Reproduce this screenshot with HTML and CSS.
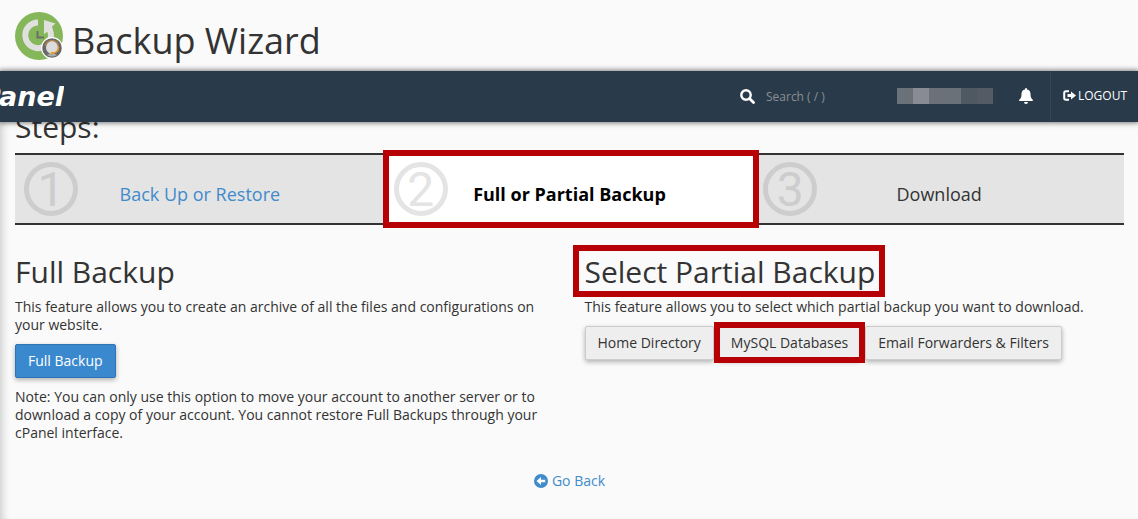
FILE: index.html
```html
<!DOCTYPE html>
<html lang="en">
<head>
<meta charset="utf-8">
<meta name="viewport" content="width=device-width, initial-scale=1">
<title>Backup Wizard</title>
<link rel="stylesheet" href="styles.css">
</head>
<body>
<header class="page-header">
  <svg class="page-icon" viewBox="0 0 50 50" aria-hidden="true">
    <circle cx="24" cy="24" r="24" fill="#85b659"/>
    <path d="M23 10.500A12.800 12.800 0 1 0 34.500 17.500" fill="none" stroke="#e0e1de" stroke-width="6"/>
    <path d="M29 8L40.500 11.500L37 14.500L38 18L32 20L29 22Z" fill="#e0e1de"/>
    <path d="M22.500 19v6.500H29" fill="none" stroke="#69706b" stroke-width="2"/>
    <circle cx="37" cy="36" r="11" fill="#fff"/>
    <circle cx="37" cy="36" r="9.800" fill="#6d6868"/>
    <ellipse cx="37" cy="35.500" rx="6" ry="6.500" fill="#dcdcdc"/>
    <path d="M30.500 34Q31 28.500 37 28.500Q43.500 28.500 43.500 35" fill="none" stroke="#bd8c3b" stroke-width="1.200"/>
    <path d="M43.500 35Q43.500 41 37 41" fill="none" stroke="#e09b2b" stroke-width="1.500"/>
    <path d="M32 43l2-1h6l2 1q-5 3-10 0z" fill="#aaa"/>
    <circle cx="37" cy="41" r="1.300" fill="#e4a02e"/>
  </svg>
  <h1 class="page-title">Backup Wizard</h1>
</header>

<nav class="navbar">
  <a class="brand" href="#">cPanel</a>
  <div class="nav-tools">
    <label class="search">
      <svg class="search-icon" viewBox="0 0 15 15" role="img" aria-label="Search"><circle cx="6" cy="6" r="4.700" fill="none" stroke="#fff" stroke-width="2.400"/><path d="M9.500 9.500l4 4" stroke="#fff" stroke-width="2.800" stroke-linecap="round"/></svg>
      <input class="search-input" type="search" placeholder="Search ( / )">
    </label>
    <div class="account"><span class="tone-a"></span><span class="tone-b"></span><span class="tone-a"></span><span class="tone-a"></span><span class="tone-c"></span><span class="tone-d"></span></div>
    <button class="bell" type="button" aria-label="Notifications">
      <svg viewBox="0 0 14 16" width="14" height="16"><path d="M7 0q1 0 1 1v.6C10.500 2 11.500 4 11.500 6c0 3.500 1 4.500 2 5.600Q14.500 13 13 13H1Q-.5 13 .5 11.600C1.500 10.500 2.500 9.500 2.500 6c0-2 1-4 3.500-4.400V1q0-1 1-1zM5 14h4a2 2 0 0 1-4 0z" fill="#fff"/></svg>
    </button>
    <a class="logout" href="#">
      <svg viewBox="0 0 13 12" width="13" height="12" aria-hidden="true"><path d="M6 1.200H3Q1.200 1.200 1.200 3v5q0 1.800 1.800 1.800h3" fill="none" stroke="#fff" stroke-width="2"/><path d="M4.500 4H8V1.500l5 4-5 4V7H4.500z" fill="#fff"/></svg>
      <span>LOGOUT</span>
    </a>
  </div>
</nav>

<main class="content">
  <h2 class="heading steps-heading">Steps:</h2>
  <ol class="steps">
    <li class="step"><span class="step-number">1</span><a class="step-label link" href="#">Back Up or Restore</a></li>
    <li class="step current marked" aria-current="step"><span class="step-number">2</span><span class="step-label">Full or Partial Backup</span></li>
    <li class="step"><span class="step-number">3</span><span class="step-label">Download</span></li>
  </ol>

  <div class="columns">
    <section>
      <h2 class="heading">Full Backup</h2>
      <p class="text">This feature allows you to create an archive of all the files and configurations on your website.</p>
      <div class="buttons"><button class="btn primary" type="button">Full Backup</button></div>
      <p class="text note">Note: You can only use this option to move your account to another server or to download a copy of your account. You cannot restore Full Backups through your cPanel interface.</p>
    </section>
    <section>
      <h2 class="heading"><span class="marked marked-title">Select Partial Backup</span></h2>
      <p class="text">This feature allows you to select which partial backup you want to download.</p>
      <div class="buttons">
        <button class="btn" type="button">Home Directory</button>
        <span class="marked marked-button"><button class="btn" type="button">MySQL Databases</button></span>
        <button class="btn" type="button">Email Forwarders &amp; Filters</button>
      </div>
    </section>
  </div>

  <div class="back-row">
    <a class="back link" href="#">
      <svg viewBox="0 0 14 14" width="14" height="14" aria-hidden="true"><circle cx="7" cy="7" r="7" fill="#428bca"/><path d="M2.500 7L7 3v2.700h4.200v2.600H7V11z" fill="#fff"/></svg>
      <span>Go Back</span>
    </a>
  </div>
</main>
</body>
</html>
```
FILE: styles.css
```css
* { box-sizing: border-box; }

body {
  margin: 0;
  min-height: 100vh;
  display: flex;
  flex-direction: column;
  background: #fafafa;
  color: #333;
  font: 14px/18px "Open Sans", "Noto Sans", sans-serif;
}

a { text-decoration: none; }
.link { color: #428bca; }

.page-header {
  display: flex;
  gap: 7px;
  height: 71px;
  padding: 12px 15px 0;
}
.page-icon { width: 50px; height: 50px; flex: none; }
.page-title { margin: 9px 0 0; font-size: 36px; line-height: 40px; font-weight: 400; }

.navbar {
  position: relative;
  z-index: 2;
  display: flex;
  justify-content: space-between;
  height: 51px;
  background: #293a4a;
  box-shadow: 0 0 5px 1px rgba(0, 0, 0, .5);
  color: #fff;
  font-size: 12px;
}
.brand {
  display: flex;
  align-items: center;
  justify-content: flex-end;
  width: 64px;
  overflow: hidden;
  color: #fff;
  font: italic bold 27px/50px "DejaVu Sans", sans-serif;
}
.nav-tools { display: flex; align-items: center; height: 50px; }
.search { display: flex; align-items: center; gap: 11px; }
.search-icon { width: 15px; height: 15px; }
.search-input {
  width: 131px;
  padding: 1px 0 0;
  border: 0;
  outline: 0;
  background: transparent;
  color: #fff;
  font: 12px/16px "Open Sans", "Noto Sans", sans-serif;
}
.search-input::placeholder { color: #8b8f92; opacity: 1; }
.account { display: flex; height: 16px; }
.account span { width: 16px; }
.tone-a { background: #6b7179; }
.tone-b { background: #888b94; }
.tone-c { background: #4f5962; }
.tone-d { background: #555b65; }
.bell { display: flex; margin: 0 17px 0 26px; padding: 0; border: 0; background: none; }
.logout {
  display: flex;
  align-items: center;
  align-self: stretch;
  gap: 2px;
  padding: 0 11px 0 12px;
  border-left: 1px solid #344656;
  color: #fff;
}

.content {
  flex: 1;
  padding: 0 14px 20px 15px;
  box-shadow: inset 8px 0 8px -6px rgba(0, 0, 0, .2);
}
.heading { margin: 0; font-size: 30px; line-height: 34px; font-weight: 400; }
.steps-heading { margin-top: -12px; }

.steps {
  display: grid;
  grid-template-columns: repeat(3, 1fr);
  margin: 9px 0 30px;
  padding: 0;
  list-style: none;
}
.step {
  position: relative;
  display: flex;
  height: 72px;
  border: solid #333;
  border-width: 2px 0;
  background: #e4e4e4;
  font-size: 18px;
  line-height: 24px;
}
.step-number {
  position: absolute;
  left: 9px;
  top: 7px;
  width: 54px;
  height: 54px;
  border: 5px solid #cdcdcd;
  border-radius: 50%;
  color: #cdcdcd;
  font: 48px/46px Roboto, Arial, sans-serif;
  text-align: center;
}
.step-label { flex: 1; padding-top: 27px; text-align: center; }
.current { background: #fff; color: #000; font-weight: 700; }
.current .step-number { border-color: #e4e4e4; color: #e4e4e4; }

.marked { position: relative; }
.marked::after {
  content: "";
  position: absolute;
  inset: -5px -5px -5px -2px;
  border: 6px solid #b60205;
  pointer-events: none;
}
.step.marked { z-index: 1; }
.marked-title { display: inline-block; }
.marked-title::after { inset: -10px -10px -8px -12px; }
.marked-button::after { inset: -4px -4px -3px; }

.columns { display: grid; grid-template-columns: 1fr 1fr; gap: 30px; }
.text { margin: 9px 0 10px; }
.note { margin: 10px 0 0; }
.buttons { display: flex; flex-wrap: wrap; gap: 4px; }
.btn {
  height: 34px;
  padding: 0 12px;
  border: 1px solid #ccc;
  border-radius: 2px;
  background: #eee;
  box-shadow: 0 2px 5px rgba(0, 0, 0, .3);
  color: #333;
  font: inherit;
}
.primary { border-color: #2f74b5; background: #3a89cf; color: #fff; }

.back-row { display: flex; justify-content: center; margin-top: 30px; }
.back { display: flex; align-items: center; gap: 4px; }
```
